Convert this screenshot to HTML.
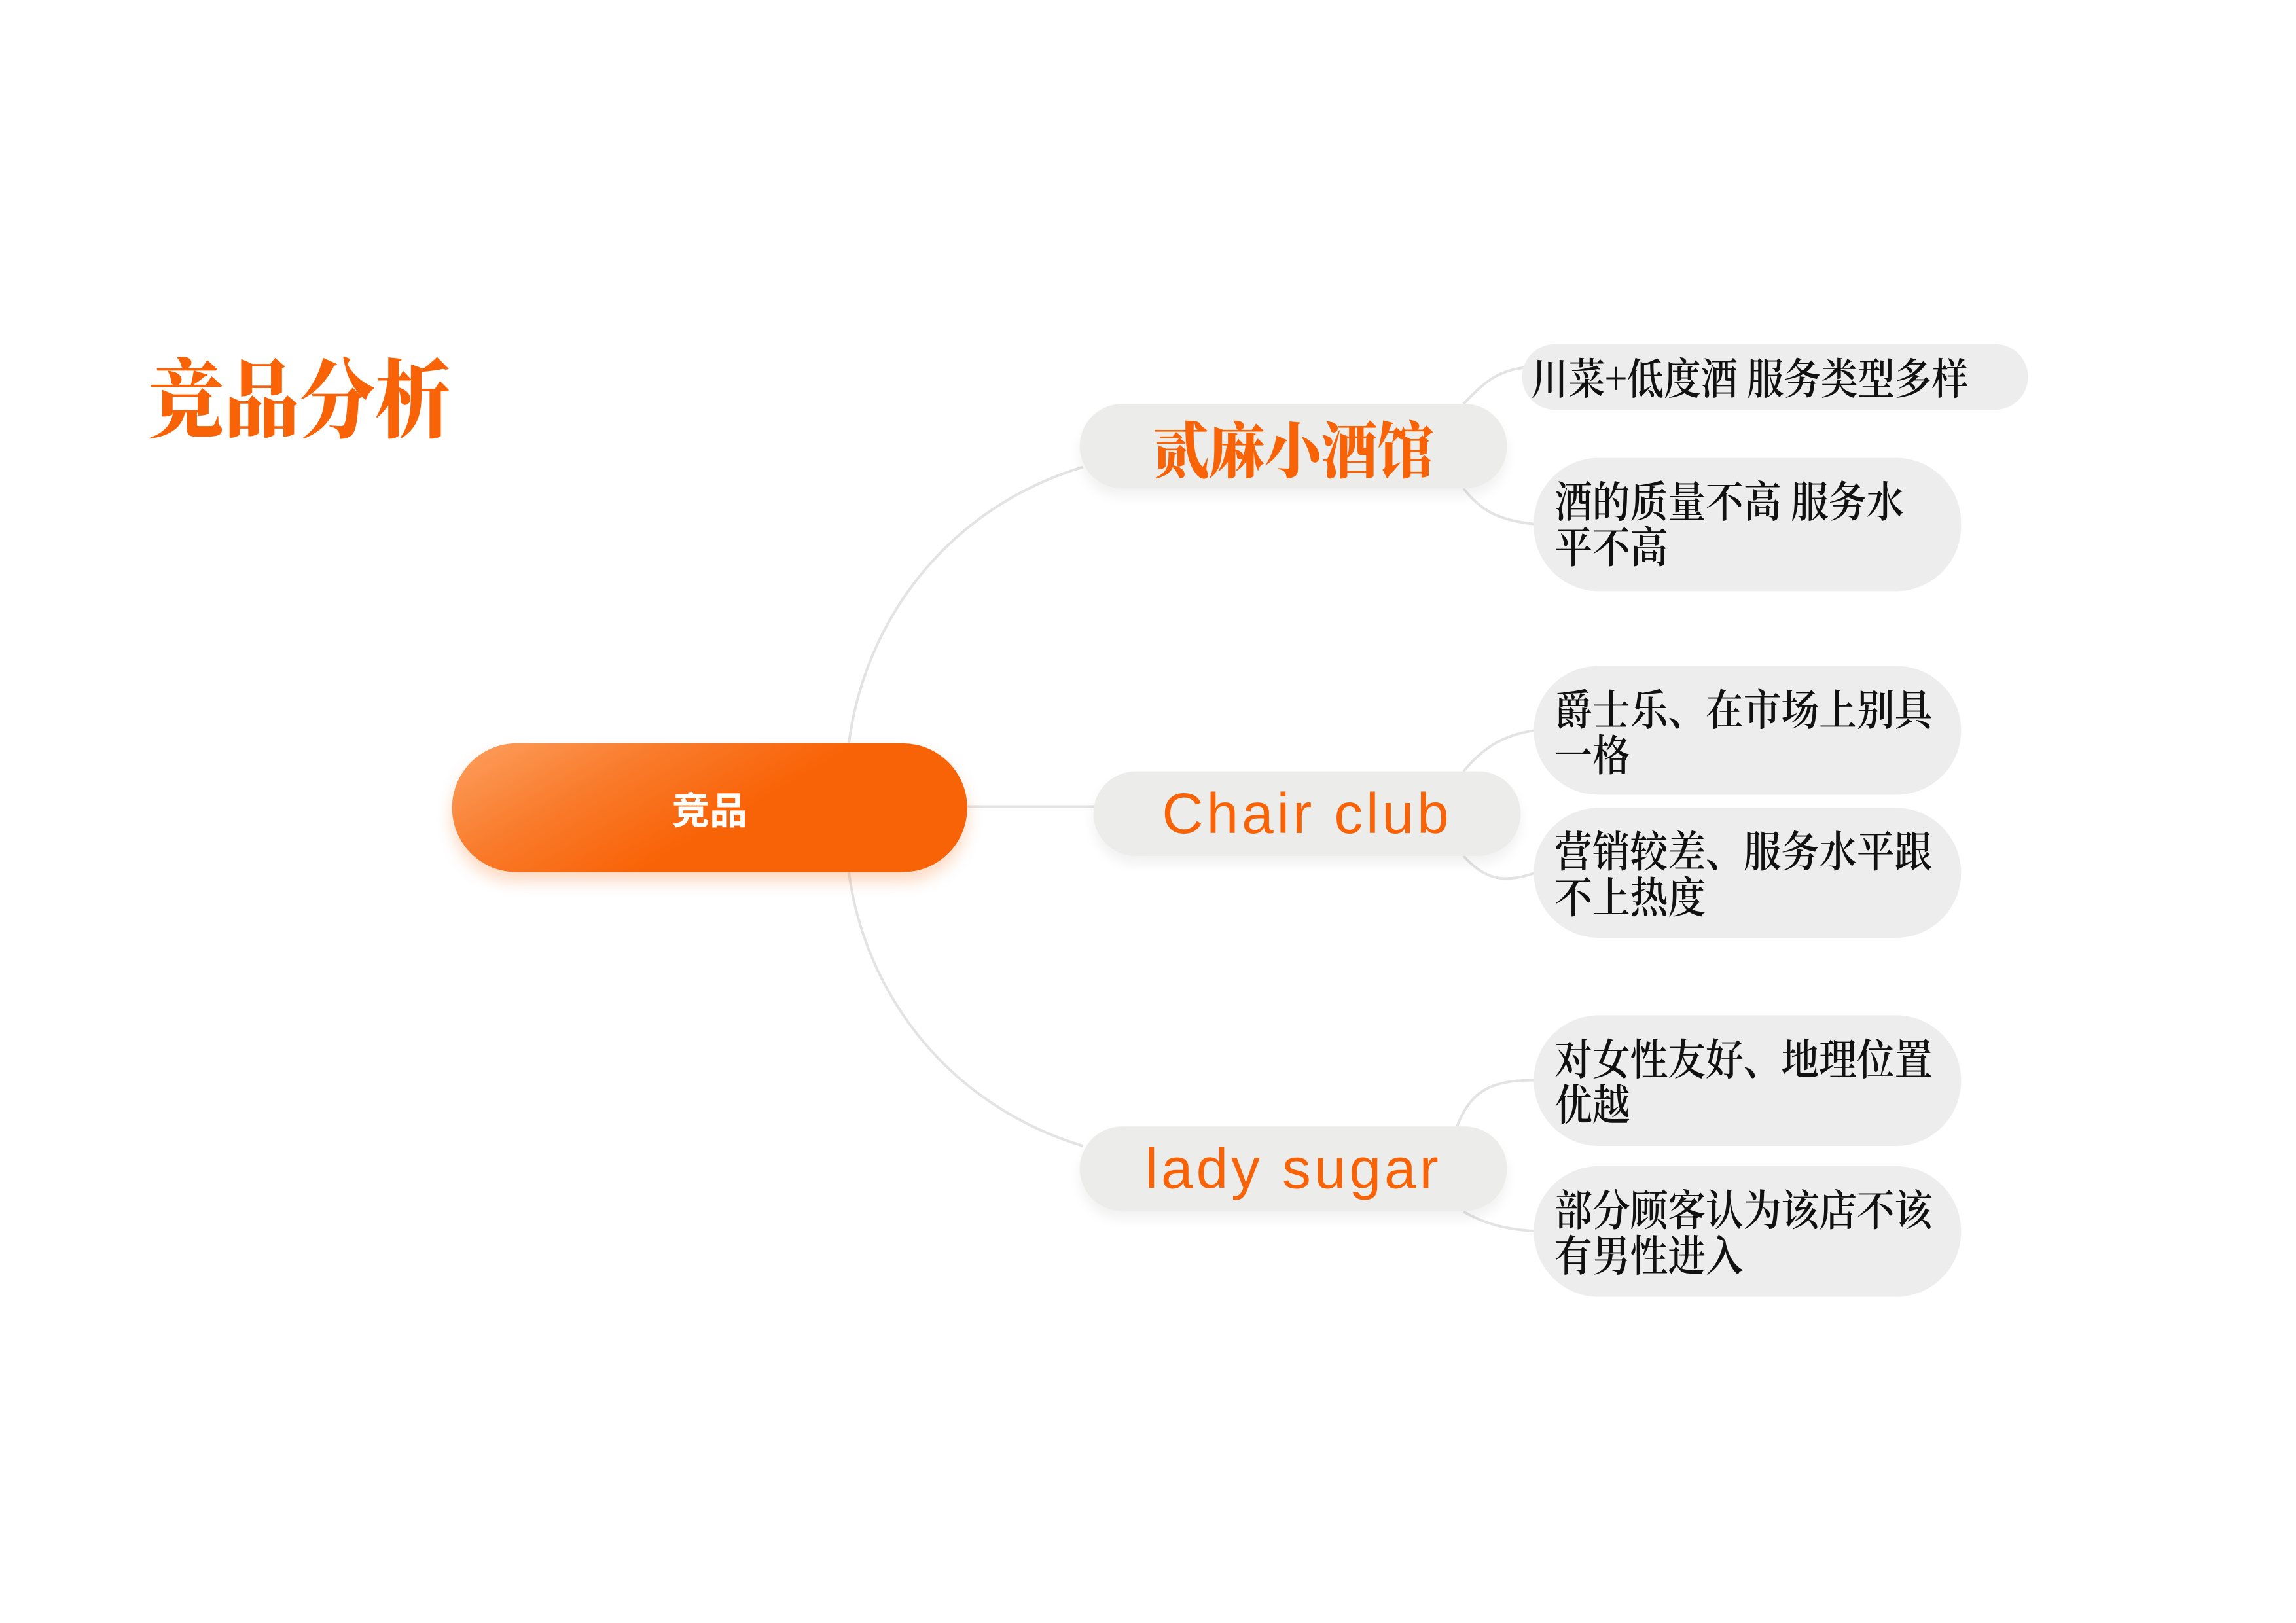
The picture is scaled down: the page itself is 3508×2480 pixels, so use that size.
<!DOCTYPE html>
<html><head><meta charset="utf-8"><style>
html,body{margin:0;padding:0;background:#fff;}
body{width:3508px;height:2480px;position:relative;overflow:hidden;font-family:"Liberation Serif","Noto Serif CJK SC",serif;}
#w{position:absolute;left:0;top:0;width:3508px;height:2480px;transform:scale(0.9938);transform-origin:0 0;}
.abs{position:absolute;}
.title{left:228px;top:530px;font-size:132px;font-weight:900;color:#f96307;font-family:"Noto Serif CJK SC",serif;line-height:150px;transform:scaleX(0.88);transform-origin:left top;white-space:nowrap;}
.center{left:695px;top:1143px;width:792px;height:198px;border-radius:99px;background:linear-gradient(150deg,#fda060 0%,#f97a2a 30%,#f96307 55%,#f96307 100%);box-shadow:0 14px 24px rgba(249,99,7,0.25);color:#fff;font-family:"Noto Sans CJK SC",sans-serif;font-weight:700;font-size:58px;display:flex;align-items:center;justify-content:center;}
.br{width:657px;height:130px;border-radius:65px;background:#ececea;box-shadow:0 12px 20px rgba(0,0,0,0.06);color:#f96307;display:flex;align-items:center;justify-content:center;white-space:nowrap;}
.leaf{background:#ededed;border-radius:100px;color:#111;font-size:66px;line-height:70px;font-family:"Noto Serif CJK SC",serif;font-weight:600;box-sizing:border-box;white-space:nowrap;}
.leaf span{display:block;transform:scaleX(0.88);transform-origin:left top;}
</style></head><body><div id="w">
<svg class="abs" style="left:0;top:0" width="3508" height="2480">
<g fill="none" stroke="#e3e3e3" stroke-width="4">
<path d="M1305 1143 C1330 950 1460 780 1665 718"/>
<path d="M1487 1240 L1685 1240"/>
<path d="M1305 1341 C1330 1530 1460 1700 1665 1762"/>
<path d="M2250 621 C2280 590 2300 570 2345 565"/>
<path d="M2250 751 C2280 790 2310 800 2360 806"/>
<path d="M2250 1186 C2280 1150 2310 1130 2360 1123"/>
<path d="M2250 1316 C2280 1350 2310 1360 2360 1342"/>
<path d="M2240 1732 C2260 1680 2290 1660 2360 1661"/>
<path d="M2250 1863 C2280 1880 2310 1890 2360 1893"/>
</g></svg>
<div class="abs title">竞品分析</div>
<div class="abs center">竞品</div>
<div class="abs br" style="left:1660px;top:621px;font-family:'Noto Serif CJK SC',serif;font-weight:900;font-size:94px;"><span style="display:inline-block;transform:scaleX(0.92)">贰麻小酒馆</span></div>
<div class="abs br" style="left:1681px;top:1186px;font-family:'Liberation Sans',sans-serif;font-size:88px;letter-spacing:5px;">Chair club</div>
<div class="abs br" style="left:1660px;top:1732px;font-family:'Liberation Sans',sans-serif;font-size:88px;letter-spacing:5px;">lady sugar</div>
<div class="abs leaf" style="left:2340px;top:529px;width:778px;height:101px;padding:14px 0 0 14px;"><span style="transform:scaleX(0.86)">川菜+低度酒 服务类型多样</span></div>
<div class="abs leaf" style="left:2358px;top:704px;width:657px;height:205px;padding:28px 0 0 32px;"><span>酒的质量不高 服务水<br>平不高</span></div>
<div class="abs leaf" style="left:2358px;top:1024px;width:657px;height:198px;padding:28px 0 0 32px;"><span>爵士乐、在市场上别具<br>一格</span></div>
<div class="abs leaf" style="left:2358px;top:1242px;width:657px;height:200px;padding:28px 0 0 32px;"><span>营销较差、服务水平跟<br>不上热度</span></div>
<div class="abs leaf" style="left:2358px;top:1561px;width:657px;height:201px;padding:28px 0 0 32px;"><span>对女性友好、地理位置<br>优越</span></div>
<div class="abs leaf" style="left:2358px;top:1793px;width:657px;height:201px;padding:28px 0 0 32px;"><span>部分顾客认为该店不该<br>有男性进入</span></div>
</div></body></html>
